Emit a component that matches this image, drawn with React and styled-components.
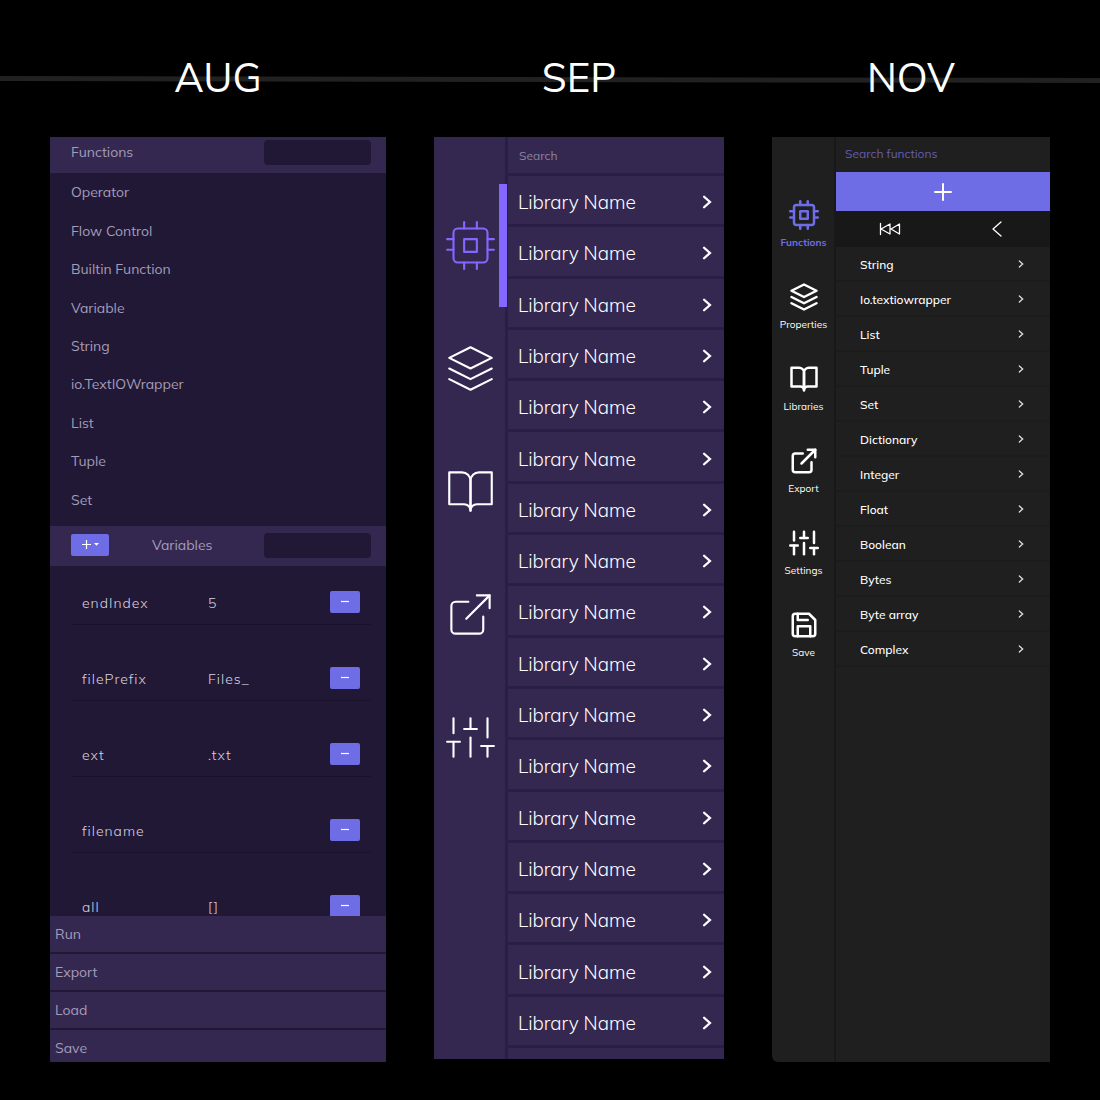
import React from "react";
import styled, { createGlobalStyle, css } from "styled-components";
import { FiCpu, FiLayers, FiBookOpen, FiExternalLink, FiSliders, FiSave } from "react-icons/fi";

const c = {
  plum: "#342851",
  plumDark: "#211836",
  plumLine: "#291e43",
  accent: "#6e6de6",
  glow: "#8467ff",
  lilac: "#a49cb8",
  coal: "#1f1f1f",
  coalDark: "#181818",
};

const GlobalStyle = createGlobalStyle`
  *, *::before, *::after { box-sizing: border-box; }
  body {
    margin: 0;
    background: #000;
    color: #fff;
    font-family: Mulish, Muli, Lato, "Open Sans", sans-serif;
  }
  button, input { font: inherit; color: inherit; border: 0; margin: 0; padding: 0; background: none; }
  button { cursor: pointer; }
  ul { list-style: none; margin: 0; padding: 0; }
  svg { display: block; flex: none; }
`;

const Page = styled.main`
  position: relative;
  min-height: 100vh;
  padding: 49px 50px 38px;
`;

const Timeline = styled.svg`
  position: absolute;
  left: 0;
  top: 76px;
  width: 100%;
  height: 8px;
`;

const Columns = styled.div`
  position: relative;
  display: grid;
  grid-template-columns: 336fr 290fr 278fr;
  column-gap: 48px;
`;

const Column = styled.section`
  display: flex;
  flex-direction: column;
  min-width: 0;
`;

const Month = styled.h2`
  margin: 0 0 32px;
  font-size: 40px;
  line-height: 56px;
  font-weight: 400;
  text-align: center;
`;

/* August */

const AugPanel = styled.div`
  height: 925px;
  display: flex;
  flex-direction: column;
  overflow: hidden;
  background: ${c.plumDark};
  color: ${c.lilac};
  font-size: 14px;
`;

const AugHeader = styled.header`
  display: grid;
  grid-template-columns: ${(p) => (p.$tall ? "81px 1fr 107px" : "1fr 107px")};
  align-items: center;
  flex: none;
  height: ${(p) => (p.$tall ? 40 : 36)}px;
  padding: 0 15px 0 21px;
  padding-bottom: ${(p) => (p.$tall ? 2 : 6)}px;
  background: ${c.plum};
`;

const AugField = styled.input`
  width: 107px;
  height: 25px;
  padding: 0 8px;
  border-radius: 4px;
  background: ${c.plumDark};
`;

const Categories = styled.ul`
  display: grid;
  grid-auto-rows: 1fr;
  flex: none;
  height: 353px;
  padding-bottom: 7px;
`;

const Category = styled.li`
  display: flex;
  align-items: center;
  padding-left: 21px;
`;

const SmallButton = styled.button`
  display: inline-flex;
  align-items: center;
  justify-content: center;
  gap: 3px;
  width: ${(p) => (p.$wide ? 38 : 30)}px;
  height: 22px;
  border-radius: 2px;
  background: ${c.accent};
  color: #fff;
`;

const VariablesBody = styled.div`
  flex: 1;
  min-height: 0;
  overflow: hidden;
  padding: 0 15px 0 21px;
`;

const VariableTable = styled.table`
  width: 100%;
  table-layout: fixed;
  border-collapse: collapse;
  color: #d6d2e0;
  letter-spacing: 1px;

  td, th {
    height: 76px;
    padding: 0 0 11px 11px;
    border-bottom: 1px solid #1a122d;
    text-align: left;
    vertical-align: bottom;
    font-weight: 300;
    line-height: 20px;
  }
  th { width: 126px; }
  td:last-child { width: 60px; padding: 0 11px 11px 0; text-align: right; }
  td:last-child button { vertical-align: bottom; }
  tr:first-child > * { height: 58px; }
`;

const Actions = styled.div`
  display: grid;
  grid-auto-rows: 36px;
  row-gap: 2px;
  flex: none;
  height: 146px;
`;

const Action = styled.button`
  padding-left: 5px;
  background: ${c.plum};
  text-align: left;
`;

/* September */

const SepPanel = styled.div`
  display: grid;
  grid-template-columns: 74px 1fr;
  height: 922px;
  overflow: hidden;
  background: ${c.plum};
`;

const SepNav = styled.nav`
  display: flex;
  flex-direction: column;
  padding: 47px 0 0 1px;
  border-right: 3px solid ${c.plumLine};
`;

const SepNavButton = styled.button`
  position: relative;
  display: flex;
  align-items: center;
  justify-content: center;
  height: 123px;
  color: #fff;
  ${(p) =>
    p.$active &&
    css`
      color: ${c.glow};
      &::after {
        content: "";
        position: absolute;
        top: 0;
        bottom: 0;
        right: -2px;
        width: 8px;
        background: ${c.glow};
      }
    `}
`;

const SepList = styled.div`
  min-width: 0;
`;

const SepSearch = styled.input`
  display: block;
  width: 100%;
  height: 39px;
  padding-left: 11px;
  border-bottom: 3px solid ${c.plumLine};
  font-size: 12px;
  &::placeholder { color: #8b84a0; opacity: 1; }
`;

const Libraries = styled.ul`
  display: grid;
  grid-auto-rows: 1fr;
  height: 872px;
`;

const LibraryButton = styled.button`
  display: flex;
  align-items: center;
  justify-content: space-between;
  width: 100%;
  height: 100%;
  padding: 4px 12px 0 10px;
  border-bottom: 3px solid ${c.plumLine};
  color: #fff;
  font-size: 19px;
  font-weight: 300;
`;

/* November */

const NovPanel = styled.div`
  display: grid;
  grid-template-columns: 64px 1fr;
  height: 925px;
  overflow: hidden;
  border-bottom-left-radius: 6px;
  background: ${c.coal};
`;

const NovNav = styled.nav`
  display: flex;
  flex-direction: column;
  padding: 46px 0 0 1px;
  border-right: 2px solid ${c.coalDark};
`;

const NovNavButton = styled.button`
  display: flex;
  flex-direction: column;
  align-items: center;
  justify-content: center;
  gap: 7px;
  height: 82px;
  color: ${(p) => (p.$active ? c.accent : "#fff")};
  font-size: 10px;
  line-height: 12px;
  font-weight: ${(p) => (p.$active ? 700 : 400)};
`;

const NovList = styled.div`
  min-width: 0;
`;

const NovSearch = styled.input`
  display: block;
  width: 100%;
  height: 35px;
  padding: 0 0 2px 9px;
  font-size: 12px;
  &::placeholder { color: #655db0; opacity: 1; }
`;

const AddButton = styled.button`
  display: flex;
  align-items: center;
  justify-content: center;
  width: 100%;
  height: 39px;
  background: ${c.accent};
`;

const Toolbar = styled.div`
  display: grid;
  grid-template-columns: 1fr 1fr;
  height: 36px;
  background: ${c.coalDark};
`;

const ToolButton = styled.button`
  display: flex;
  align-items: center;
  justify-content: center;
`;

const TypeButton = styled.button`
  display: flex;
  align-items: center;
  justify-content: space-between;
  width: 100%;
  height: 35px;
  padding: 1px 26px 0 24px;
  border-bottom: 2px solid #1c1c1c;
  font-size: 12px;
  font-weight: 500;
`;

const Minus = () => (
  <svg width="10" height="10" viewBox="0 0 10 10" fill="none" stroke="currentColor" strokeWidth="1.2" aria-hidden="true">
    <path d="M1 4.5h8" />
  </svg>
);

const PlusCaret = () => (
  <svg width="18" height="10" viewBox="0 0 18 10" fill="none" aria-hidden="true">
    <path d="M1 4.500h9M5.500 0v9" stroke="currentColor" strokeWidth="1.2" />
    <path d="M13 3h5l-2.500 2.800z" fill="currentColor" />
  </svg>
);

const Chevron = ({ w, h, weight, color = "currentColor" }) => (
  <svg width={w} height={h} viewBox="0 0 8 12" fill="none" stroke={color} strokeWidth={weight} strokeLinecap="round" aria-hidden="true">
    <path d="M1.5 1.5L6.5 6l-5 4.5" />
  </svg>
);

const categories = ["Operator", "Flow Control", "Builtin Function", "Variable", "String", "io.TextIOWrapper", "List", "Tuple", "Set"];
const variables = [
  ["endIndex", "5"],
  ["filePrefix", "Files_"],
  ["ext", ".txt"],
  ["filename", ""],
  ["all", "[]"],
];
const actions = ["Run", "Export", "Load", "Save"];
const sepNav = [
  ["Functions", FiCpu],
  ["Properties", FiLayers],
  ["Libraries", FiBookOpen],
  ["Export", FiExternalLink],
  ["Settings", FiSliders],
];
const novNav = [...sepNav, ["Save", FiSave]];
const types = ["String", "Io.textiowrapper", "List", "Tuple", "Set", "Dictionary", "Integer", "Float", "Boolean", "Bytes", "Byte array", "Complex"];

function August() {
  return (
    <Column>
      <Month>AUG</Month>
      <AugPanel>
        <AugHeader>
          <span>Functions</span>
          <AugField aria-label="Filter functions" />
        </AugHeader>
        <Categories>
          {categories.map((name) => (
            <Category key={name}>{name}</Category>
          ))}
        </Categories>
        <AugHeader $tall>
          <SmallButton $wide aria-label="Add variable">
            <PlusCaret />
          </SmallButton>
          <span>Variables</span>
          <AugField aria-label="Filter variables" />
        </AugHeader>
        <VariablesBody>
          <VariableTable>
            <tbody>
              {variables.map(([name, value]) => (
                <tr key={name}>
                  <th scope="row">{name}</th>
                  <td>{value}</td>
                  <td>
                    <SmallButton aria-label={`Remove ${name}`}>
                      <Minus />
                    </SmallButton>
                  </td>
                </tr>
              ))}
            </tbody>
          </VariableTable>
        </VariablesBody>
        <Actions>
          {actions.map((name) => (
            <Action key={name}>{name}</Action>
          ))}
        </Actions>
      </AugPanel>
    </Column>
  );
}

function September() {
  return (
    <Column>
      <Month>SEP</Month>
      <SepPanel>
        <SepNav>
          {sepNav.map(([name, Icon], i) => (
            <SepNavButton key={name} $active={i === 0} aria-label={name}>
              <Icon size={51} strokeWidth={1} />
            </SepNavButton>
          ))}
        </SepNav>
        <SepList>
          <SepSearch placeholder="Search" aria-label="Search" />
          <Libraries>
            {Array.from({ length: 17 }, (_, i) => (
              <li key={i}>
                <LibraryButton>
                  Library Name
                  <Chevron w={10} h={14} weight={2} />
                </LibraryButton>
              </li>
            ))}
          </Libraries>
        </SepList>
      </SepPanel>
    </Column>
  );
}

function November() {
  return (
    <Column>
      <Month>NOV</Month>
      <NovPanel>
        <NovNav>
          {novNav.map(([name, Icon], i) => (
            <NovNavButton key={name} $active={i === 0}>
              <Icon size={30} />
              {name}
            </NovNavButton>
          ))}
        </NovNav>
        <NovList>
          <NovSearch placeholder="Search functions" aria-label="Search functions" />
          <AddButton aria-label="Add">
            <svg width="18" height="18" viewBox="0 0 18 18" stroke="#fff" strokeWidth="2" strokeLinecap="round" aria-hidden="true">
              <path d="M1 9h16M9 1v16" />
            </svg>
          </AddButton>
          <Toolbar>
            <ToolButton aria-label="First">
              <svg width="22" height="14" viewBox="0 0 22 14" fill="none" stroke="#fff" strokeWidth="1.3" strokeLinejoin="round" strokeLinecap="round" aria-hidden="true">
                <path d="M1.500 1.500v11M11 2v10L2 7zM20.500 2v10L12 7z" />
              </svg>
            </ToolButton>
            <ToolButton aria-label="Back">
              <svg width="10" height="16" viewBox="0 0 10 16" fill="none" stroke="#fff" strokeWidth="1.3" strokeLinecap="round" strokeLinejoin="round" aria-hidden="true">
                <path d="M9 1L1 8l8 7" />
              </svg>
            </ToolButton>
          </Toolbar>
          <ul>
            {types.map((name) => (
              <li key={name}>
                <TypeButton>
                  {name}
                  <Chevron w={6} h={8} weight={2} color="#ddd" />
                </TypeButton>
              </li>
            ))}
          </ul>
        </NovList>
      </NovPanel>
    </Column>
  );
}

export default function App() {
  return (
    <>
      <GlobalStyle />
      <Page>
        <Timeline viewBox="0 0 1100 8" preserveAspectRatio="none" aria-hidden="true">
          <path d="M0 2.6L1100 4.5" stroke="#212121" strokeWidth="5" />
        </Timeline>
        <Columns>
          <August />
          <September />
          <November />
        </Columns>
      </Page>
    </>
  );
}
